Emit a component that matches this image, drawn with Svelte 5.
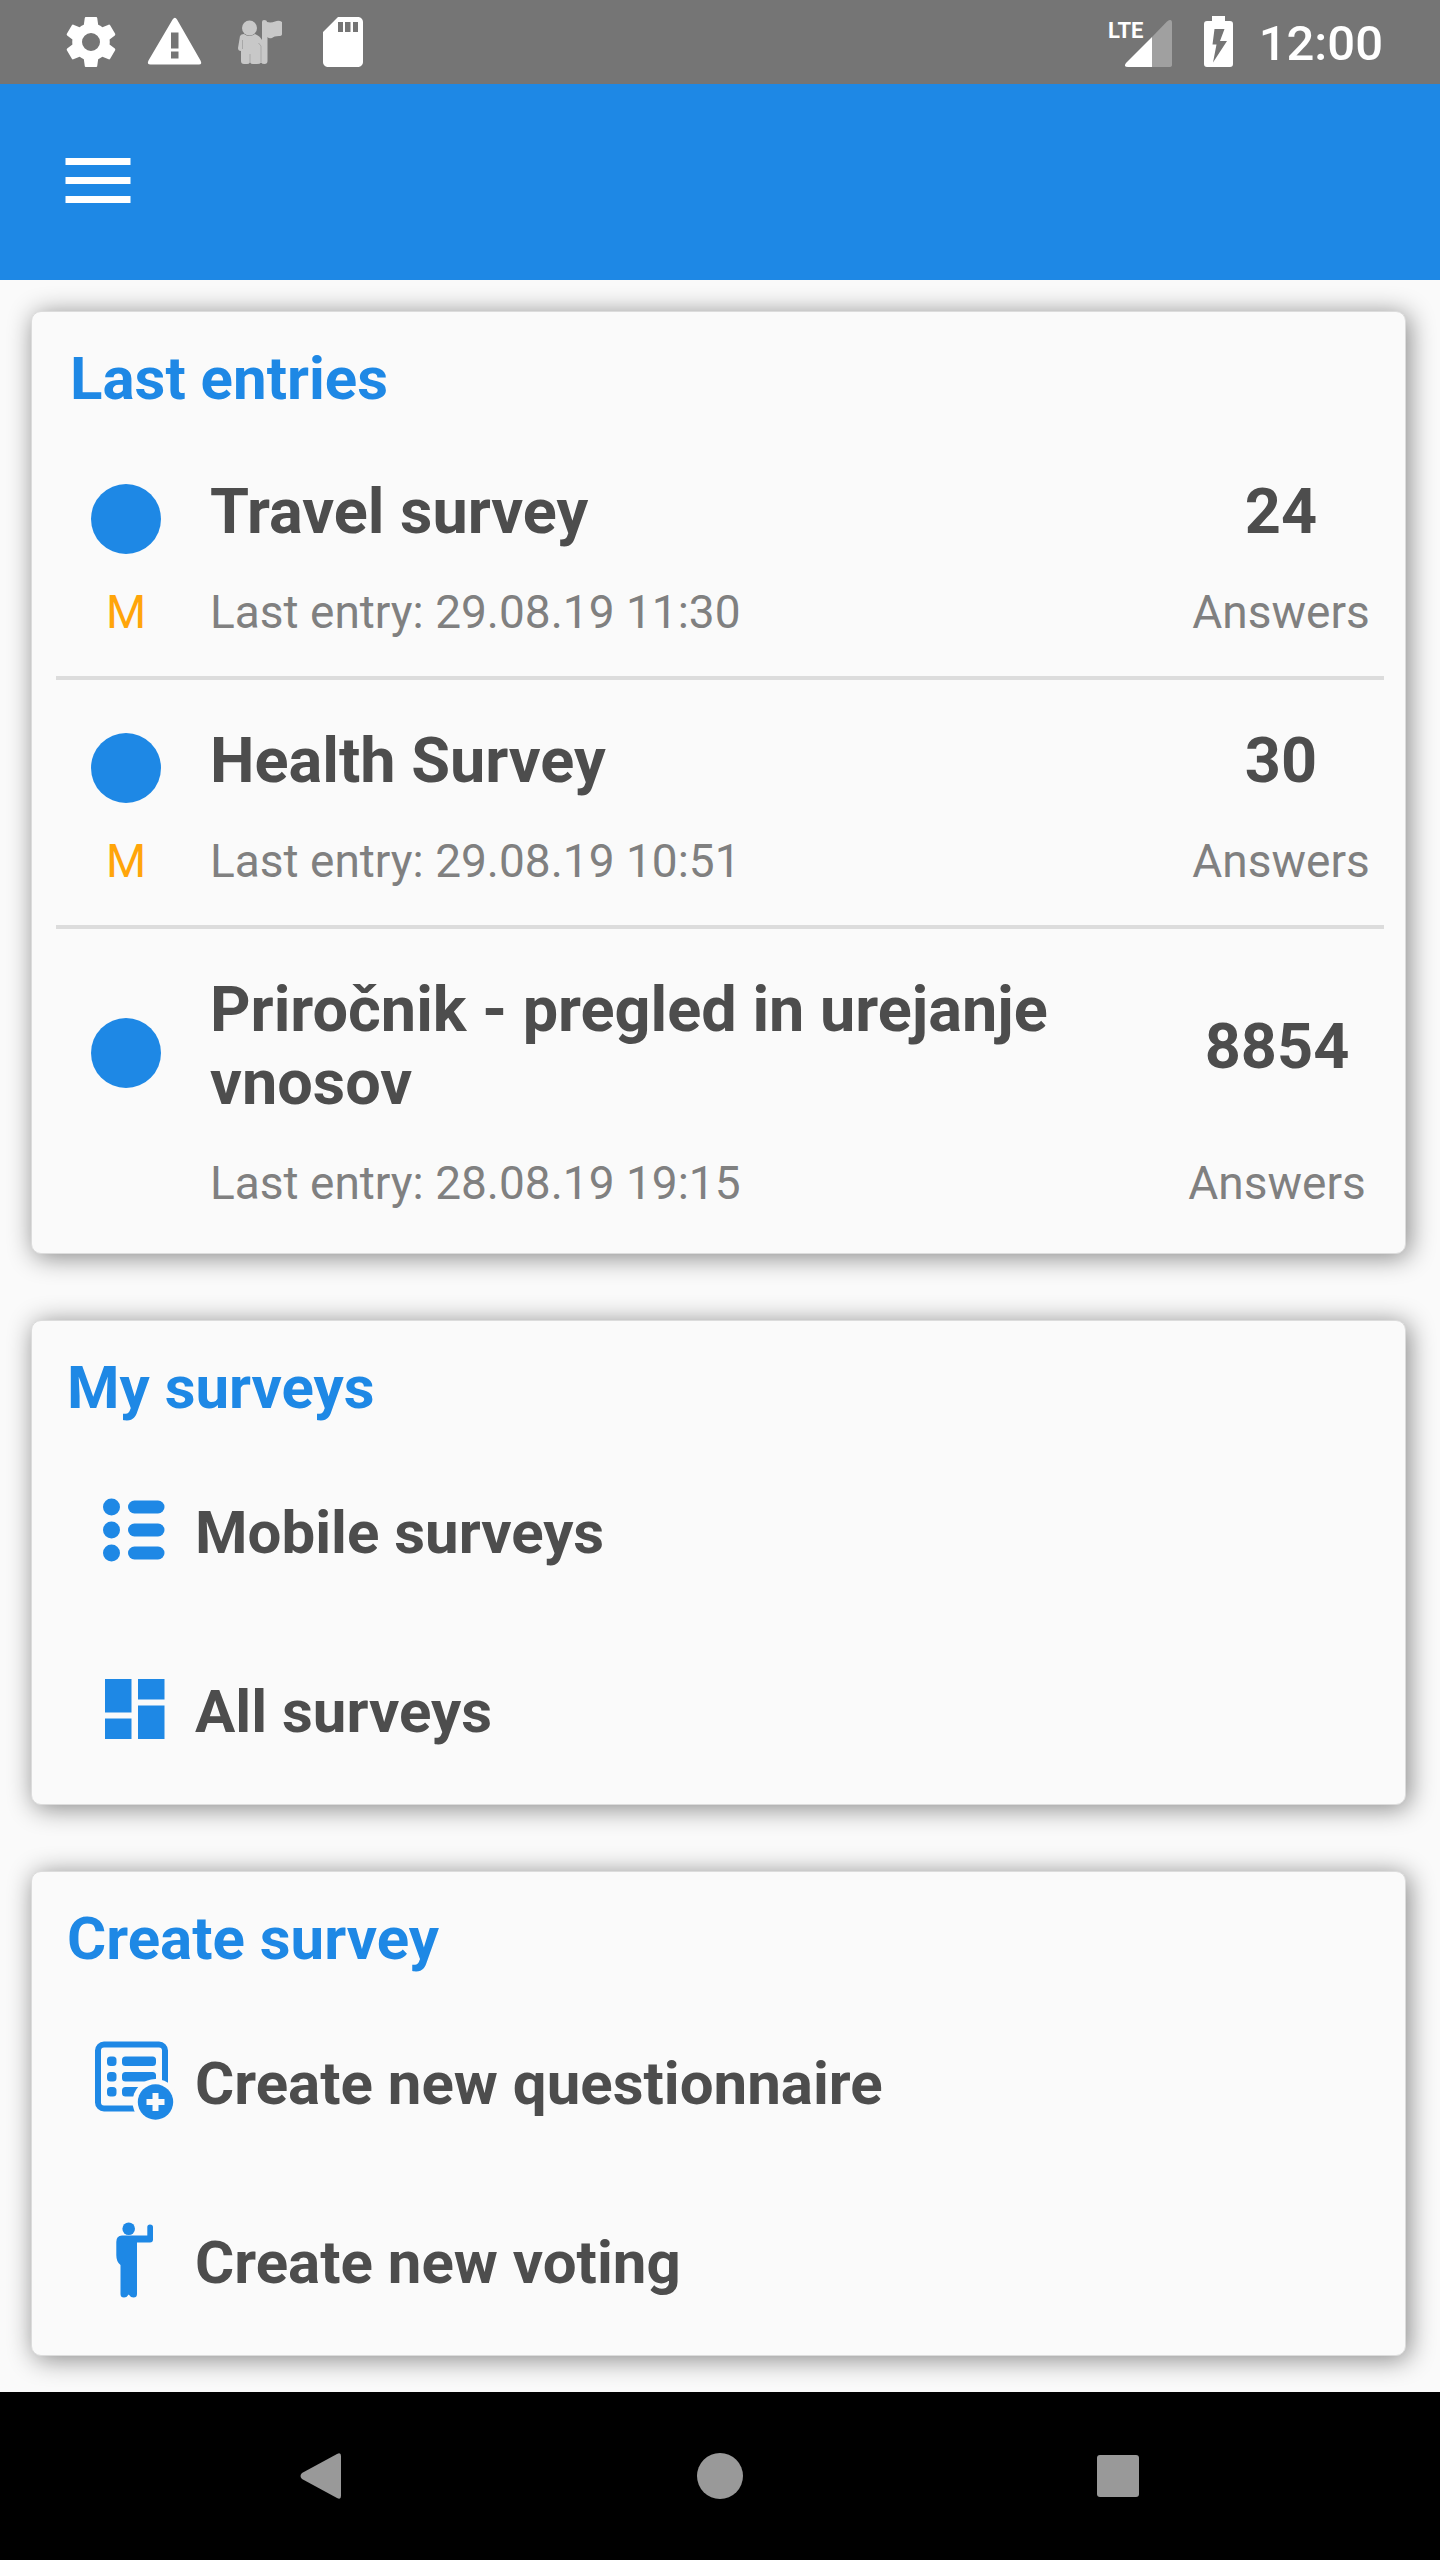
<script>
  const entries = [
    { title: 'Travel survey', date: '29.08.19 11:30', mobile: true, answers: 24 },
    { title: 'Health Survey', date: '29.08.19 10:51', mobile: true, answers: 30 },
    { title: 'Priročnik - pregled in urejanje vnosov', date: '28.08.19 19:15', mobile: false, answers: 8854 }
  ];

  const groups = [
    {
      title: 'My surveys',
      items: [
        { icon: 'list', label: 'Mobile surveys' },
        { icon: 'grid', label: 'All surveys' }
      ]
    },
    {
      title: 'Create survey',
      items: [
        { icon: 'form', label: 'Create new questionnaire' },
        { icon: 'vote', label: 'Create new voting' }
      ]
    }
  ];
</script>

<div class="screen">
  <div class="status">
    <div class="notices">
      <svg viewBox="0 0 24 24" aria-hidden="true">
        <path fill-rule="evenodd" d="M19.43 12.98c.04-.32.07-.64.07-.98s-.03-.66-.07-.98l2.11-1.65c.19-.15.24-.42.12-.64l-2-3.46c-.12-.22-.39-.3-.61-.22l-2.49 1c-.52-.4-1.08-.73-1.69-.98l-.38-2.65C14.46 2.18 14.25 2 14 2h-4c-.25 0-.46.18-.49.42l-.38 2.65c-.61.25-1.17.59-1.69.98l-2.49-1c-.23-.09-.49 0-.61.22l-2 3.46c-.13.22-.07.49.12.64l2.11 1.65c-.04.32-.07.65-.07.98s.03.66.07.98l-2.11 1.65c-.19.15-.24.42-.12.64l2 3.46c.12.22.39.3.61.22l2.49-1c.52.4 1.08.73 1.69.98l.38 2.65c.03.24.24.42.49.42h4c.25 0 .46-.18.49-.42l.38-2.65c.61-.25 1.17-.59 1.69-.98l2.49 1c.23.09.49 0 .61-.22l2-3.46c.12-.22.07-.49-.12-.64l-2.11-1.65zM12 15.6a3.6 3.6 0 1 1 0-7.2 3.6 3.6 0 0 1 0 7.2z" />
      </svg>
      <svg viewBox="0 0 60 60" aria-hidden="true">
        <path fill-rule="evenodd" d="M27.600 7.500Q30 4 32 7.500L55.500 48.500Q57.500 52.500 54 52.500H5.500Q1.500 52.500 3.500 48.500ZM26 20.500V36.500H33.500V20.500ZM26 39.500V46.500H33.500V39.500Z" />
      </svg>
      <svg class="dim" viewBox="0 0 60 60" aria-hidden="true">
        <circle cx="20.500" cy="16" r="7.500" />
        <path d="M15 22Q20 26 26 22Q31 24 33 28V10Q33 8 35 8Q38 8 38 10Q42 11 46 9.500Q50 8 53 10V22Q53 24 50 24Q45 24 43 26Q40 27 38.500 25V49Q38.500 52 35.500 52Q33 52 32 50.500Q31 52 28 52H24Q22 52 21 50.500Q20 52 18 52H15Q12 52 12 49V39Q9 39 9 36L11 24Q12 22 15 22Z" />
        <path class="crease" d="M13.500 37V28M21 42V51M32 50V34L29.500 31" />
      </svg>
      <svg viewBox="0 0 24 24" aria-hidden="true">
        <path fill-rule="evenodd" d="M18 2h-8L4 8v12c0 1.100.9 2 2 2h12c1.100 0 2-.9 2-2V4c0-1.100-.9-2-2-2zM12 8h-2V4h2v4zm3 0h-2.200V4H15v4zm3 0h-2V4h2v4z" />
      </svg>
    </div>
    <div class="system">
      <svg class="signal" viewBox="0 0 62 52" aria-hidden="true">
        <path class="faint" d="M42 21L57 5.500Q62 2 62 7V49Q62 51 59 51H42Z" />
        <path d="M42 21V51H18Q13 51 16 47Z" />
        <text x="-2" y="22">LTE</text>
      </svg>
      <svg class="battery" viewBox="0 0 29 52" aria-hidden="true">
        <path fill-rule="evenodd" d="M8 0H21V5H26Q29 5 29 8V48Q29 51 26 51H3Q0 51 0 48V8Q0 5 3 5H8ZM10.500 13L8.500 28.500H12.500L9 46.500L23 25H16L20.500 13Z" />
      </svg>
      <time>12:00</time>
    </div>
  </div>

  <header>
    <button class="menu" aria-label="Menu">
      <svg viewBox="0 0 84 84"><path d="M9.500 18h65v7h-65zM9.500 37h65v7h-65zM9.500 56h65v7h-65z" /></svg>
    </button>
  </header>

  <main>
    <section class="recent">
      <h2>Last entries</h2>
      <ul>
        {#each entries as entry}
          <li>
            <a class="entry" href="#entry">
              <span class="dot"></span>
              <span class="name">{entry.title}</span>
              <span class="count">{entry.answers}</span>
              <span class="mark">{entry.mobile ? 'M' : ''}</span>
              <span class="note">Last entry: {entry.date}</span>
              <span class="note unit">Answers</span>
            </a>
          </li>
        {/each}
      </ul>
    </section>

    {#each groups as group}
      <section class="group">
        <h2>{group.title}</h2>
        <ul>
          {#each group.items as item}
            <li>
              <a class="item" href="#{item.icon}">
                <svg viewBox="0 0 84 84" aria-hidden="true">
                  {#if item.icon === 'list'}
                    {#each [19, 42, 65] as y}
                      <circle cx="19.500" cy={y} r="8.500" />
                      <rect x="36" y={y - 6.5} width="36.500" height="13" rx="6.500" />
                    {/each}
                  {:else if item.icon === 'grid'}
                    <path d="M13 12h26.500v33.500H13zM13 51.500h26.500V72H13zM46 12h26.500v20.500H46zM46 38.500h26.500V72H46z" />
                  {:else if item.icon === 'form'}
                    <rect class="frame" x="6" y="5.500" width="67" height="64" rx="6" />
                    {#each [17.5, 33, 48] as y}
                      <rect x="15" {y} width="9.500" height="9.500" rx="3.500" />
                      <rect x="30" {y} width="34" height="9.500" rx="3.500" />
                    {/each}
                    <circle class="paper" cx="63.500" cy="63" r="23" />
                    <circle cx="63.500" cy="63" r="17.700" />
                    <path class="paper" d="M60.500 54h6v6h6v6h-6v6h-6v-6h-6v-6h6z" />
                  {:else}
                    <circle cx="36.700" cy="10.800" r="6.300" />
                    <path d="M30 17.500H55.300V9Q55.300 6.500 58 6.500Q61 6.500 61 9V21.500Q61 24.500 58 24.500H45V76Q45 79.500 41.500 79.500Q38.500 79.500 36.700 76.500Q35 79.500 32 79.500Q28.500 79.500 28.500 76V47Q24.300 44 24.300 37V24Q24.300 17.500 30 17.500Z" />
                  {/if}
                </svg>
                <span>{item.label}</span>
              </a>
            </li>
          {/each}
        </ul>
      </section>
    {/each}
  </main>

  <nav>
    <button aria-label="Back">
      <svg viewBox="0 0 48 48"><path d="M4 21L39 2Q43 0 43 4V44Q43 48 39 46L4 27Q1 24 4 21Z" /></svg>
    </button>
    <button aria-label="Home">
      <svg viewBox="0 0 48 48"><circle cx="24" cy="24" r="23" /></svg>
    </button>
    <button aria-label="Overview">
      <svg viewBox="0 0 48 48"><rect x="3" y="3" width="42" height="42" rx="3" /></svg>
    </button>
  </nav>
</div>

<style>
  :global(body) {
    background: #fafafa;
  }

  .screen {
    min-height: 100vh;
    display: flex;
    flex-direction: column;
    font-family: Roboto, 'Liberation Sans', sans-serif;
    color: #4d4d4d;
    background: #fafafa;
  }

  svg {
    display: block;
    flex: none;
    fill: currentColor;
  }

  button {
    padding: 0;
    border: 0;
    background: none;
    color: inherit;
    display: flex;
    align-items: center;
    justify-content: center;
  }

  a {
    color: inherit;
    text-decoration: none;
  }

  ul {
    list-style: none;
    margin: 0;
    padding: 0;
  }

  .status {
    height: 84px;
    padding: 0 57px 0 61px;
    display: flex;
    align-items: center;
    justify-content: space-between;
    background: #757575;
    color: #fff;
  }

  .notices {
    display: flex;
    gap: 24px;
  }

  .notices svg {
    width: 60px;
    height: 60px;
  }

  .notices .dim {
    color: #c8c8c8;
  }

  .crease {
    fill: none;
    stroke: #a8a8a8;
    stroke-width: 1;
  }

  .system {
    display: flex;
    align-items: center;
  }

  .signal {
    width: 62px;
    height: 52px;
    margin-right: 32px;
    overflow: visible;
  }

  .signal text {
    font-size: 22px;
    font-weight: 700;
  }

  .faint {
    fill: #a0a0a0;
  }

  .battery {
    width: 29px;
    height: 52px;
    margin-right: 26px;
  }

  time {
    padding-top: 4px;
    font-size: 49px;
    line-height: 56px;
    font-weight: 500;
  }

  header {
    height: 196px;
    padding: 0 56px;
    display: flex;
    align-items: center;
    background: #1e88e5;
    color: #fff;
  }

  .menu svg {
    width: 84px;
    height: 84px;
  }

  main {
    flex: 1;
    padding: 31px 34px 36px 31px;
    display: flex;
    flex-direction: column;
    gap: 66px;
  }

  section {
    box-sizing: border-box;
    border: 1px solid #dcdcdc;
    border-radius: 10px;
    background: #fafafa;
    box-shadow: 3px 3px 26px rgba(0, 0, 0, 0.48);
  }

  h2 {
    margin: 0;
    padding: 32px 35px 0;
    font-size: 60px;
    line-height: 70px;
    font-weight: 700;
    color: #1e88e5;
  }

  .recent {
    padding-bottom: 6px;
  }

  .recent h2 {
    padding-inline: 38px;
  }

  .recent ul {
    margin: 17px 21px 0 24px;
  }

  .recent li + li {
    border-top: 4px solid #dcdcdc;
  }

  .recent li:last-child {
    padding-right: 4px;
  }

  .entry {
    display: grid;
    grid-template-columns: 140px 1fr 206px;
    column-gap: 14px;
    row-gap: 37px;
    align-items: center;
    padding: 44px 0 37px;
  }

  .dot {
    width: 70px;
    height: 70px;
    margin: 7px 0 -7px;
    justify-self: center;
    border-radius: 50%;
    background: #1e88e5;
  }

  .name,
  .count {
    font-size: 63px;
    line-height: 73px;
    font-weight: 700;
  }

  .count,
  .mark,
  .unit {
    text-align: center;
  }

  .mark,
  .note {
    font-size: 46px;
    line-height: 54px;
  }

  .mark {
    color: #ffa50a;
  }

  .note {
    color: #808080;
  }

  .group {
    padding-bottom: 3px;
  }

  .group ul {
    margin-top: 20px;
  }

  .item {
    height: 179px;
    padding-left: 60px;
    display: flex;
    align-items: center;
    gap: 19px;
    font-size: 60px;
    line-height: 70px;
    font-weight: 700;
  }

  .item svg {
    width: 84px;
    height: 84px;
    margin-bottom: 6px;
    color: #1e88e5;
  }

  .frame {
    fill: none;
    stroke: currentColor;
    stroke-width: 6;
  }

  .paper {
    fill: #fafafa;
  }

  nav {
    height: 168px;
    display: flex;
    justify-content: center;
    gap: 230px;
    background: #000;
    color: #999;
  }

  nav button {
    width: 168px;
  }

  nav svg {
    width: 48px;
    height: 48px;
  }
</style>
